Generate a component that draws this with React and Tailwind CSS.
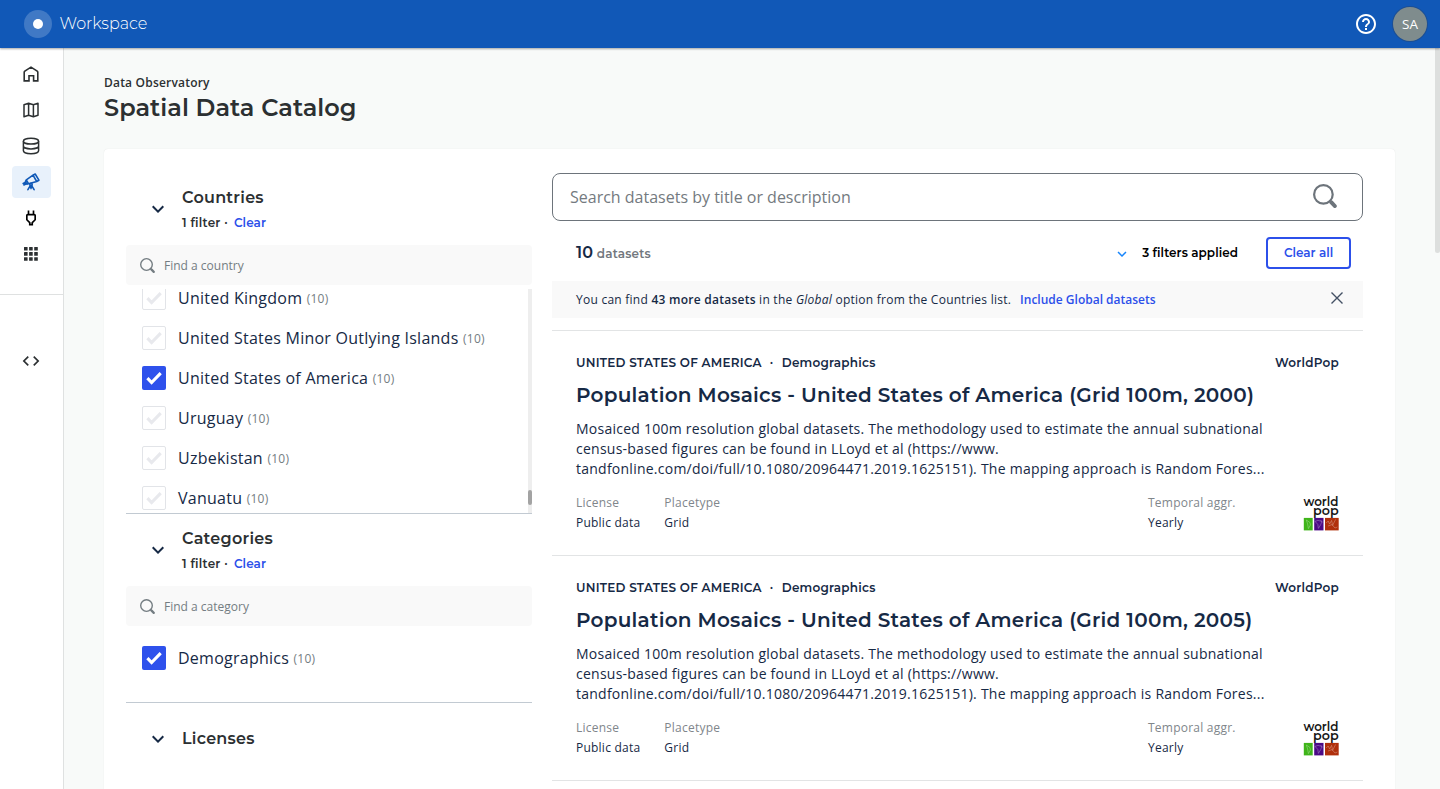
import { MdCode, MdHelpOutline, MdKeyboardArrowDown, MdOutlinePower } from "react-icons/md";

const heading = "font-['Montserrat',sans-serif] font-semibold";

function HomeIcon() {
  return (
    <svg className="h-4 w-4" viewBox="0 0 16 16" fill="none" stroke="currentColor" strokeWidth="1.6">
      <path d="M1.2 14.9V6.3Q1.2 5.6 1.8 5.1L8 1.1l6.2 4q.6.5.6 1.2v8.6h-4.2V9.7H6v5.2z" />
    </svg>
  );
}

function MapIcon() {
  return (
    <svg className="h-4 w-4" viewBox="0 0 16 16" fill="none" stroke="currentColor" strokeWidth="1.5" strokeLinejoin="round">
      <path d="M1 2.7 5.6 1.3l4.8 1.4L15 1.3v12l-4.6 1.4-4.8-1.4L1 14.7zM5.6 1.3v12M10.4 2.7v12" />
    </svg>
  );
}

function DatabaseIcon() {
  return (
    <svg className="h-[18px] w-[18px]" viewBox="0 0 18 18" fill="none" stroke="currentColor" strokeWidth="1.5">
      <ellipse cx="9" cy="4.2" rx="7.6" ry="2.9" />
      <path d="M1.4 4.2v9.6c0 1.6 3.4 2.9 7.6 2.9s7.6-1.3 7.6-2.9V4.2M1.4 9c0 1.6 3.4 2.9 7.6 2.9s7.6-1.3 7.6-2.9" />
    </svg>
  );
}

function TelescopeIcon() {
  return (
    <svg className="h-[18px] w-[18px]" viewBox="0 0 18 18" fill="none" stroke="currentColor" strokeWidth="1.6" strokeLinejoin="round" strokeLinecap="round">
      <path d="m11 2.2 2.2-1.2 3.7 6.2-2.2 1.3zM11 2.2 4.3 6.9l2.3 3.9 8.1-2.3M4.3 6.9 3.4 8.7l1.4 2.4 1.8-.3M3.6 9.2l-2.4 1.3M4.4 10.8 1.9 12" />
      <circle cx="9" cy="11.6" r="1.2" />
      <path d="m8.3 12.7-2.4 4M9.7 12.7l2.4 4M9 13v2.6" />
    </svg>
  );
}

function AppsIcon() {
  return (
    <svg className="h-[14px] w-[14px]" viewBox="0 0 14 14" fill="currentColor">
      {[0, 5.1, 10.2].map((y) => [0, 5.1, 10.2].map((x) => <rect key={`${x}-${y}`} x={x} y={y} width="3.6" height="3.6" rx="0.3" />))}
    </svg>
  );
}

function SearchIcon({ className }) {
  return (
    <svg className={className} viewBox="0 0 24 24" fill="none" stroke="currentColor" strokeLinecap="round">
      <circle cx="10.4" cy="10.4" r="9.3" strokeWidth="2.2" />
      <path d="m17 17 1.5 1.5" strokeWidth="2.2" />
      <path d="m18.4 18.4 3.4 3.6" strokeWidth="4" />
    </svg>
  );
}

const navItems = [
  { id: "home", icon: <HomeIcon /> },
  { id: "maps", icon: <MapIcon /> },
  { id: "data", icon: <DatabaseIcon /> },
  { id: "observatory", icon: <TelescopeIcon />, active: true },
  { id: "connections", icon: <MdOutlinePower size={20} className="text-black" /> },
  { id: "apps", icon: <AppsIcon /> },
];

function Sidebar() {
  return (
    <nav className="flex w-16 shrink-0 flex-col border-r border-[#dfe1e1] bg-white text-[#2c3032]">
      <div className="flex h-[247px] flex-col gap-1 border-b border-[#dfe1e1] pt-[10px] pl-3">
        {navItems.map((n) => (
          <a
            key={n.id}
            className={
              n.active
                ? "flex h-8 w-[39px] items-center justify-center rounded bg-[#e8f1fb] pr-px text-[#1059b7]"
                : "flex h-8 w-[39px] items-center justify-center rounded pr-px"
            }
          >
            {n.icon}
          </a>
        ))}
      </div>
      <a className="mt-[50px] ml-3 flex h-8 w-[39px] items-center justify-center pr-px">
        <MdCode size={20} />
      </a>
    </nav>
  );
}

function Header() {
  return (
    <header className="relative z-10 flex h-12 shrink-0 items-center bg-[#1158b7] pr-[13px] pl-6 text-white shadow-[0_1px_2px_rgba(0,0,0,0.35)]">
      <span className="flex h-7 w-7 items-center justify-center rounded-full bg-white/20">
        <span className="h-[10px] w-[10px] rounded-full bg-white" />
      </span>
      <span className="ml-[7.5px] font-['Montserrat',sans-serif] text-base leading-6 font-[350]">Workspace</span>
      <MdHelpOutline size={24} className="ml-auto" />
      <span className="ml-[15px] flex h-[34px] w-[34px] items-center justify-center rounded-full bg-[#7f8c8d] font-['Open_Sans',sans-serif] text-[13.5px] ring-1 ring-[#1c4f94]">
        SA
      </span>
    </header>
  );
}

function FilterHeader({ title, clearable }) {
  return (
    <div className="flex items-center">
      <MdKeyboardArrowDown size={24} className={clearable ? "mb-[2px] ml-5 text-[#162945]" : "ml-5 text-[#162945]"} />
      <div className="ml-3 flex flex-col">
        <h3
          className={
            clearable
              ? `${heading} pt-px text-base leading-6 tracking-[0.25px] text-[#2c3032]`
              : `${heading} text-base leading-6 tracking-[0.25px] text-[#2c3032]`
          }
        >
          {title}
        </h3>
        {clearable && (
          <div className={`${heading} mt-[2px] flex text-xs leading-[22px] text-[#2c3032]`}>
            <span className="tracking-[0.25px]">1 filter ·</span>
            <a className="ml-1.5 tracking-[0.1px] text-[#2c50ea]">Clear</a>
          </div>
        )}
      </div>
    </div>
  );
}

function FilterSearch({ placeholder }) {
  return (
    <div className="flex h-10 items-center rounded bg-[#f9f9f9] pl-[14px] text-[#747d82]">
      <SearchIcon className="h-[15px] w-[15px]" />
      <span className="ml-[9px] pt-[2px] text-xs">{placeholder}</span>
    </div>
  );
}

function Option({ label, checked }) {
  return (
    <label className="flex h-10 shrink-0 items-center pl-4">
      <span
        className={
          checked
            ? "flex h-6 w-6 items-center justify-center rounded-xs bg-[#2e51ec] text-white"
            : "flex h-6 w-6 items-center justify-center rounded-xs border border-[#e2e4e8] text-[#e8e9ed]"
        }
      >
        <svg className="h-6 w-6 shrink-0" viewBox="0 0 24 24" fill="none" stroke="currentColor" strokeWidth="3.1">
          <path d="m5.4 12.2 4.2 4.3 9.1-9.3" />
        </svg>
      </span>
      <span className="ml-3 text-base tracking-[0.25px] text-[#162945]">{label}</span>
      <span className="ml-[4.5px] pt-[2px] text-xs tracking-[0.25px] text-[#747d82]">(10)</span>
    </label>
  );
}

const countries = ["United Kingdom", "United States Minor Outlying Islands", "United States of America", "Uruguay", "Uzbekistan", "Vanuatu"];

function Filters() {
  return (
    <aside className="flex w-[406px] shrink-0 flex-col">
      <section className="flex flex-col border-b border-[#c2cad2] pt-9">
        <FilterHeader title="Countries" clearable />
        <div className="mt-[11px]">
          <FilterSearch placeholder="Find a country" />
        </div>
        <div className="mt-1 flex h-[224px] overflow-hidden">
          <div className="-mt-[11px] flex flex-1 flex-col">
            {countries.map((c) => (
              <Option key={c} label={c} checked={c === "United States of America"} />
            ))}
          </div>
          <div className="w-1 bg-[#eeeeee] pt-[201px]">
            <div className="h-[15px] rounded-sm bg-[#a3a3a3]" />
          </div>
        </div>
      </section>
      <section className="flex h-[189px] shrink-0 flex-col border-b border-[#c2cad2] pt-3">
        <FilterHeader title="Categories" clearable />
        <div className="mt-[11px] mb-3">
          <FilterSearch placeholder="Find a category" />
        </div>
        <Option label="Demographics" checked />
      </section>
      <section className="pt-6">
        <FilterHeader title="Licenses" />
      </section>
    </aside>
  );
}

function WorldPopLogo() {
  return (
    <svg className="h-9 w-9 overflow-visible" viewBox="0 0 36 36">
      <g fontFamily="Montserrat, sans-serif" fontWeight="600" fill="#161616">
        <text x="0.4" y="10.4" fontSize="12.5" textLength="35" lengthAdjust="spacingAndGlyphs">world</text>
        <text x="10" y="18.9" fontSize="13" textLength="25.6" lengthAdjust="spacingAndGlyphs">pop</text>
      </g>
      <path fill="#3fb51a" d="M.8 21.9h8.9v12.5H.8z" />
      <path fill="#4b0a86" d="M11.2 21.9h9.3v12.5h-9.3z" />
      <path fill="#b0300c" d="M22 21.9h13.7v12.5H22z" />
      <g fill="none" stroke="#fff" strokeWidth="0.6" opacity="0.45">
        <path d="m3.4 24 3.6 2.6.4 2.4-2 3.6-.8-4.6z" />
        <path d="m12 25.4 3-1 3.8 1-1 3-2.4 4-.6-4zM17.6 24l1.8 2.4" />
        <path d="m23.2 27 2-2 1.4 3 2-3.6 1 5 3-6M25 30l4-1.4 3 3.4 2.4-1" />
      </g>
    </svg>
  );
}

function Field({ label, value }) {
  return (
    <div className="flex flex-col text-xs leading-5 tracking-[0.23px]">
      <span className="text-[#80868b]">{label}</span>
      <span className="text-[#162945]">{value}</span>
    </div>
  );
}

function Dataset({ year }) {
  return (
    <article className="flex h-[225px] shrink-0 flex-col border-b border-[#e2e4e5] px-6 pt-6 text-[#162945]">
      <div className={`${heading} flex text-xs leading-4 tracking-[0.24px]`}>
        <span>UNITED STATES OF AMERICA</span>
        <span className="ml-2 w-3">·</span>
        <span>Demographics</span>
        <span className="ml-auto">WorldPop</span>
      </div>
      <h2 className={`${heading} mt-3 text-xl leading-6 tracking-[0.25px] whitespace-nowrap`}>
        Population Mosaics - United States of America (Grid 100m, {year})
      </h2>
      <p className="mt-3 text-sm leading-5 tracking-[0.245px] whitespace-nowrap">
        Mosaiced 100m resolution global datasets. The methodology used to estimate the annual subnational
        <br />
        census-based figures can be found in LLoyd et al (https://www.
        <br />
        tandfonline.com/doi/full/10.1080/20964471.2019.1625151). The mapping approach is Random Fores...
      </p>
      <div className="mt-[14px] flex">
        <Field label="License" value="Public data" />
        <div className="ml-6">
          <Field label="Placetype" value="Grid" />
        </div>
        <div className="ml-auto w-[155px]">
          <Field label="Temporal aggr." value="Yearly" />
        </div>
        <div className="mt-[3px]">
          <WorldPopLogo />
        </div>
      </div>
    </article>
  );
}

function Results() {
  return (
    <main className="ml-5 flex w-[811px] flex-col pt-6">
      <div className="flex h-12 shrink-0 items-center rounded-lg border border-[#6d747b] pr-[25px] pl-[17px] text-[#747a80]">
        <span className="text-base">Search datasets by title or description</span>
        <SearchIcon className="mb-[2px] ml-auto h-6 w-6 text-[#6d747b]" />
      </div>
      <div className="mt-4 flex h-8 shrink-0 items-center pr-3 pl-6">
        <div className={`${heading} flex items-baseline tracking-[0.2px]`}>
          <span className="text-base text-[#162945]">10</span>
          <span className="ml-[3.5px] text-xs text-[#72777d]">datasets</span>
        </div>
        <MdKeyboardArrowDown size={18} className="mt-[2px] ml-auto text-[#1785fb]" />
        <span className={`${heading} ml-[11px] text-xs tracking-[0.05px] text-black`}>3 filters applied</span>
        <button className={`${heading} ml-7 h-8 w-[85px] rounded border-2 border-[#2c50ea] text-xs text-[#2c50ea]`}>Clear all</button>
      </div>
      <div className="mt-3 flex h-[37px] shrink-0 items-center bg-[#f9f9f9] pr-5 pl-6 text-xs tracking-[0.25px] text-[#162945]">
        <p>
          You can find <strong className="font-semibold">43 more datasets</strong> in the <em>Global</em> option from the Countries list.
        </p>
        <a className="ml-[9px] font-semibold tracking-normal text-[#2c50ea]">Include Global datasets</a>
        <svg className="mb-[3px] ml-auto h-3 w-3" viewBox="0 0 12 12" stroke="#435064" strokeWidth="1.4" fill="none">
          <path d="m.5.5 11 11M11.5.5l-11 11" />
        </svg>
      </div>
      <div className="mt-3 flex flex-col border-t border-[#e2e4e5]">
        <Dataset year="2000" />
        <Dataset year="2005" />
      </div>
    </main>
  );
}

export default function App() {
  return (
    <div className="flex h-[789px] w-[1440px] flex-col overflow-hidden font-['Open_Sans','Noto_Sans',sans-serif] antialiased">
      <Header />
      <div className="flex min-h-0 flex-1">
        <Sidebar />
        <div className="flex flex-1 overflow-hidden bg-[#f8faf9]">
          <div className="flex w-[1371px] shrink-0 flex-col pl-10">
            <p className="mt-6 text-xs leading-[22px] font-semibold tracking-[0.2px] text-[#2c3032]">Data Observatory</p>
            <h1 className={`${heading} text-2xl leading-7 tracking-[0.05px] text-[#2c3032]`}>Spatial Data Catalog</h1>
            <div className="mt-[27px] flex min-h-[660px] w-[1291px] rounded bg-white pl-[22px] shadow-[0_0_1px_rgba(0,0,0,0.12)]">
              <Filters />
              <Results />
            </div>
          </div>
          <div className="h-[205px] w-[5px] shrink-0 rounded-b bg-[#dddfde]" />
        </div>
      </div>
    </div>
  );
}
